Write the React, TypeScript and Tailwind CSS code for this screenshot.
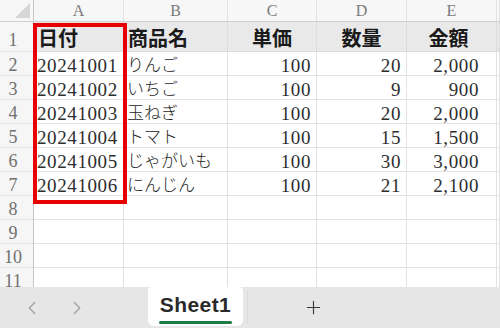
import { ChevronLeft, ChevronRight, Plus } from 'lucide-react';

const widths = ['w-[90px]', 'w-[104px]', 'w-[89px]', 'w-[90px]', 'w-[90px]', 'w-[3px]'];
const letters = ['A', 'B', 'C', 'D', 'E', ''];

const rows = [
    ['20241001', 'りんご', '100', '20', '2,000'],
    ['20241002', 'いちご', '100', '9', '900'],
    ['20241003', '玉ねぎ', '100', '20', '2,000'],
    ['20241004', 'トマト', '100', '15', '1,500'],
    ['20241005', 'じゃがいも', '100', '30', '3,000'],
    ['20241006', 'にんじん', '100', '21', '2,100'],
];

const serif = "font-['Liberation_Serif',serif]";
const jp = "font-['Noto_Sans_CJK_JP',sans-serif]";

// alignment per column for data rows
const cellAlign = [
    `justify-start pl-[3px] ${serif} text-[19px] tracking-[0.6px] pt-[4px] leading-[20px] text-[#2e2e2e]`,
    `justify-start pl-[3px] ${jp} font-light text-[17px] pt-[2px] leading-[20px] text-[#262626]`,
    `justify-end pr-[5px] ${serif} text-[19px] tracking-[0.6px] pt-[4px] leading-[20px] text-[#2e2e2e]`,
    `justify-end pr-[5px] ${serif} text-[19px] tracking-[0.6px] pt-[4px] leading-[20px] text-[#2e2e2e]`,
    `justify-end pr-[17px] ${serif} text-[19px] tracking-[0.6px] pt-[4px] leading-[20px] text-[#2e2e2e]`,
    '',
];

const headers = ['日付', '商品名', '単価', '数量', '金額', ''];
const headerAlign = ['justify-start pl-[4px]', 'justify-start pl-[4px]', 'justify-center', 'justify-center', 'justify-center pr-[6px]', ''];

function RowNum({ n, tall }: { n: number; tall?: boolean }) {
    return (
        <div
            className={`w-[34px] shrink-0 flex justify-center pr-[7px] border-r border-b border-r-[#c6c6c6] border-b-[#e2e2e2] bg-[#f6f6f6] text-[18px] text-[#707070] ${serif} ${tall ? 'h-[30px] pt-[8px] leading-[20px]' : 'h-[24px] pt-[3px] leading-[20px]'}`}
        >
            {n}
        </div>
    );
}

export default function App() {
    return (
        <div className="w-[500px] h-[328px] overflow-hidden bg-white flex flex-col text-[#1a1a1a]">
            <div className="relative h-[287px] overflow-hidden shrink-0">
                {/* column letters */}
                <div className="flex h-[22px] bg-[#f7f7f7] border-b border-[#cfcfcf]">
                    <div className="w-[34px] shrink-0 border-r border-[#c6c6c6] flex items-end justify-end pr-[2px] pb-[2px]">
                        <svg width="17" height="17" viewBox="0 0 17 17">
                            <polygon points="16,1 16,16 1,16" fill="#d6d6d6" />
                        </svg>
                    </div>
                    {letters.map((l, i) => (
                        <div
                            key={i}
                            className={`${widths[i]} shrink-0 flex justify-center border-r border-[#e2e2e2] text-[16px] leading-[22px] text-[#7a7a7a] ${serif}`}
                        >
                            {l}
                        </div>
                    ))}
                </div>

                {/* header row */}
                <div className="flex h-[30px]">
                    <RowNum n={1} tall />
                    {headers.map((h, i) => (
                        <div
                            key={i}
                            className={`${widths[i]} shrink-0 flex h-[30px] bg-[#e9e9e9] border-r border-b border-[#dcdcdc] pt-[2px] leading-[28px] text-[20px] font-bold ${jp} ${headerAlign[i]}`}
                        >
                            {h}
                        </div>
                    ))}
                </div>

                {/* data rows */}
                {Array.from({ length: 10 }).map((_, r) => {
                    const data = rows[r] ?? ['', '', '', '', ''];
                    return (
                        <div key={r} className="flex h-[24px]">
                            <RowNum n={r + 2} />
                            {widths.map((w, i) => (
                                <div
                                    key={i}
                                    className={`${w} shrink-0 flex h-[24px] border-r border-b border-[#e2e2e2] whitespace-nowrap ${cellAlign[i]}`}
                                >
                                    {data[i] ?? ''}
                                </div>
                            ))}
                        </div>
                    );
                })}

                {/* selection highlight */}
                <div className="absolute left-[33px] top-[23px] w-[94px] h-[181px] border-[4px] border-[#e80000]" />
            </div>

            {/* sheet tabs bar */}
            <div className="flex-1 flex items-stretch bg-[#e6e6e6]">
                <div className="w-[148px] shrink-0 flex items-center pl-[21px] gap-[23px] text-[#a0a0a0]">
                    <ChevronLeft size={22} strokeWidth={1.3} />
                    <ChevronRight size={22} strokeWidth={1.3} />
                </div>
                <div className="w-[95px] shrink-0 mb-[2px] bg-white rounded-b-md rounded-t-sm flex flex-col items-center pt-[6px]">
                    <span className="font-['Liberation_Sans',sans-serif] font-bold text-[21px] leading-[24px] tracking-[0.4px] text-[#2a2a2a]">
                        Sheet1
                    </span>
                    <div className="mt-[4px] w-[73px] h-[3px] rounded-full bg-[#1f7a46]" />
                </div>
                <div className="w-px my-[4px] ml-[4px] bg-[#d9d9d9]" />
                <div className="flex-1 flex items-center pl-[55px] text-[#3a3a3a]">
                    <Plus size={21} strokeWidth={1.3} />
                </div>
            </div>
        </div>
    );
}
